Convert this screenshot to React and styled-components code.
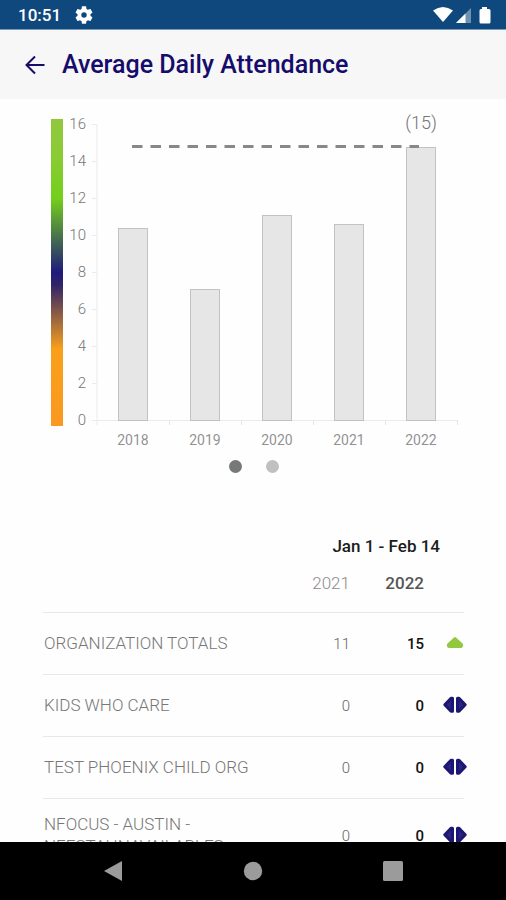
import React from "react";
import styled, { createGlobalStyle } from "styled-components";

const GlobalStyle = createGlobalStyle`
  *, *::before, *::after { box-sizing: border-box; }
  body { margin: 0; background: #fff; font-family: Roboto, "Liberation Sans", sans-serif; }
`;

const Screen = styled.div`
  display: flex;
  flex-direction: column;
  height: 100vh;
  overflow: hidden;
  background: #fefefe;
`;

const StatusBar = styled.div`
  display: flex;
  align-items: center;
  flex: none;
  height: 30px;
  padding: 0 15px 0 18px;
  gap: 14px;
  background: #0f487c;
  border-bottom: 1px solid #7d9ab8;
  color: #fff;
`;

const Clock = styled.time`
  font-size: 17px;
  line-height: 30px;
  font-weight: 500;
`;

const StatusIcons = styled.div`
  display: flex;
  align-items: center;
  margin-left: auto;
`;

const Header = styled.header`
  display: flex;
  align-items: center;
  flex: none;
  height: 69px;
  padding: 0 24px;
  gap: 16px;
  background: #f7f7f7;
  color: #150c6b;
`;

const BackButton = styled.button`
  display: flex;
  padding: 0;
  border: 0;
  background: none;
  color: inherit;
  cursor: pointer;
`;

const Title = styled.h1`
  margin: 0;
  font-size: 25px;
  line-height: 32px;
  font-weight: 500;
`;

const Content = styled.main`
  flex: 1;
  min-height: 0;
  overflow-y: auto;
  scrollbar-width: none;
`;

const Chart = styled.svg`
  display: block;
  width: 100%;
  font-family: Roboto, "Liberation Sans", sans-serif;
`;

const Tick = styled.text`
  font-size: ${(p) => p.$size || 15}px;
  font-weight: ${(p) => p.$weight || 300};
  fill: #757575;
  text-anchor: ${(p) => p.$anchor || "middle"};
`;

const Pager = styled.div`
  display: flex;
  justify-content: center;
  gap: 24px;
  padding: 5px 0 0 2px;
`;

const Dot = styled.button`
  width: 13px;
  height: 13px;
  padding: 0;
  border: 0;
  border-radius: 50%;
  background: ${(p) => (p.$active ? "#777979" : "#c0c0c0")};
  cursor: pointer;
`;

const TableWrap = styled.section`
  padding: 60px 42px 0 43px;
`;

const Table = styled.table`
  width: 100%;
  table-layout: fixed;
  border-collapse: collapse;
  font-size: 17px;
  line-height: 22px;
`;

const Col = styled.col`
  width: ${(p) => p.$width};
`;

const Period = styled.th`
  height: 25px;
  padding: 0 24px 0 0;
  color: #1c1c1c;
  font-weight: 500;
  text-align: right;
`;

const Year = styled.th`
  height: 54px;
  padding: 4px 0 8px;
  vertical-align: middle;
  text-align: right;
  font-size: 17px;
  font-weight: ${(p) => (p.$current ? 500 : 300)};
  color: ${(p) => (p.$current ? "#555" : "#8c8c8c")};
`;

const Row = styled.tr`
  height: 62px;
  border-top: 1px solid #e8e8e8;
`;

const Name = styled.th`
  padding: 14px 0 14px 1px;
  font-weight: 300;
  text-align: left;
  color: #777;
`;

const Value = styled.td`
  padding: 2px 0 0;
  text-align: right;
  font-size: 15px;
  font-weight: ${(p) => (p.$current ? 500 : 300)};
  color: ${(p) => (p.$current ? "#111" : "#666")};
`;

const TrendCell = styled.td`
  padding: 0 0 0 19px;
`;

const TrendIcon = styled.svg`
  display: block;
  overflow: visible;
`;

const NavBar = styled.nav`
  display: flex;
  align-items: center;
  justify-content: center;
  gap: 120px;
  flex: none;
  height: 58px;
  background: #000;
`;

const NavButton = styled.button`
  display: flex;
  padding: 0;
  border: 0;
  background: none;
  color: #9b9b9b;
  cursor: pointer;
`;

const bars = [
  { year: "2018", x: 133, value: 10.4 },
  { year: "2019", x: 205, value: 7.1 },
  { year: "2020", x: 277, value: 11.1 },
  { year: "2021", x: 349, value: 10.6 },
  { year: "2022", x: 421, value: 14.75 },
];
const ticks = [0, 2, 4, 6, 8, 10, 12, 14, 16];
const BASE = 321;
const toY = (v) => Math.round(BASE - v * 18.5);

const rows = [
  { name: "ORGANIZATION TOTALS", previous: 11, current: 15, trend: "up" },
  { name: "KIDS WHO CARE", previous: 0, current: 0, trend: "same" },
  { name: "TEST PHOENIX CHILD ORG", previous: 0, current: 0, trend: "same" },
  { name: "NFOCUS - AUSTIN - NEESTAHNAVAILABLES", previous: 0, current: 0, trend: "same" },
];

function AttendanceChart() {
  return (
    <Chart viewBox="0 0 506 356" role="img" aria-label="Average daily attendance by year">
      <defs>
        <linearGradient id="scale" x1="0" y1="0" x2="0" y2="1">
          <stop offset="0" stopColor="#91c83e" />
          <stop offset="0.12" stopColor="#8acb35" />
          <stop offset="0.26" stopColor="#73cf1b" />
          <stop offset="0.5" stopColor="#1f1a7b" />
          <stop offset="0.54" stopColor="#302467" />
          <stop offset="0.75" stopColor="#f9a01b" />
          <stop offset="1" stopColor="#fb9820" />
        </linearGradient>
      </defs>
      <rect x="51" y="20" width="12" height="307" fill="url(#scale)" />
      <path d={`M97 25V${BASE + 5}M92 ${BASE + 0.5}H458`} stroke="#ebebeb" fill="none" />
      {ticks.map((v) => (
        <g key={v}>
          <path d={`M92 ${toY(v) + 0.5}H97`} stroke="#ebebeb" />
          <Tick x="86" y={toY(v) + 5} $anchor="end">{v}</Tick>
        </g>
      ))}
      {bars.map((b) => (
        <g key={b.year}>
          <path d={`M${b.x + 36.5} ${BASE}v5`} stroke="#e4e4e4" />
          <rect x={b.x - 14.5} y={toY(b.value) + 0.5} width="29" height={BASE - toY(b.value)} fill="#e6e6e6" stroke="#c2c2c2" />
          <Tick x={b.x} y="346" $size={14} $weight={400} fillOpacity="0.8">{b.year}</Tick>
        </g>
      ))}
      <path d="M132 47.5H419" stroke="#888" strokeWidth="3" strokeDasharray="10.5 8" />
      <Tick x="421" y="30" $size={18}>(15)</Tick>
    </Chart>
  );
}

function Trend({ kind }) {
  if (kind === "up") {
    return (
      <TrendIcon width="24" height="18" viewBox="0 0 24 18" role="img" aria-label="Up">
        <path d="M12 4.5L18.5 10.5Q19 12.5 17.5 12.5H6.5Q5 12.5 5.5 10.5Z" fill="#91c83e" stroke="#91c83e" strokeWidth="3" strokeLinejoin="round" />
      </TrendIcon>
    );
  }
  return (
    <TrendIcon width="24" height="18" viewBox="0 0 24 18" role="img" aria-label="No change">
      <g fill="#29247d" stroke="#1c1773" strokeWidth="3" strokeLinejoin="round">
        <path d="M9.5 2.2V15.2H8L1.8 8.7L8 2.2Z" />
        <path d="M14.5 2.2V15.2H16L22.2 8.7L16 2.2Z" />
      </g>
    </TrendIcon>
  );
}

export default function App() {
  return (
    <Screen>
      <GlobalStyle />
      <StatusBar>
        <Clock>10:51</Clock>
        <svg width="18" height="18" viewBox="2 2 20 20" aria-hidden="true">
          <path fill="#fff" fillRule="evenodd" d="M19.14 12.94c.04-.3.06-.61.06-.94s-.02-.64-.07-.94l2.03-1.58c.18-.14.23-.41.12-.61l-1.92-3.32c-.12-.22-.37-.29-.59-.22l-2.39.96c-.5-.38-1.03-.7-1.62-.94l-.36-2.54c-.04-.24-.24-.41-.48-.41h-3.84c-.24 0-.43.17-.47.41l-.36 2.54c-.59.24-1.13.57-1.62.94l-2.39-.96c-.22-.08-.47 0-.59.22L2.74 8.87c-.12.21-.08.47.12.61l2.03 1.58c-.05.3-.09.63-.09.94s.02.64.07.94l-2.03 1.58c-.18.14-.23.41-.12.61l1.92 3.32c.12.22.37.29.59.22l2.39-.96c.5.38 1.03.7 1.62.94l.36 2.54c.05.24.24.41.48.41h3.84c.24 0 .44-.17.47-.41l.36-2.54c.59-.24 1.13-.56 1.62-.94l2.39.96c.22.08.47 0 .59-.22l1.92-3.32c.12-.22.07-.47-.12-.61zM12 15a3 3 0 1 1 0-6 3 3 0 0 1 0 6z" />
        </svg>
        <StatusIcons>
          <svg width="59" height="20" viewBox="0 0 59 20" aria-hidden="true">
            <path d="M1 5.5Q11 -1.5 21 5.5L11 17Z" fill="#fff" />
            <path d="M39 3V18H24Z" fill="#fff" opacity="0.4" />
            <path d="M33.5 8.5V18H24Z" fill="#fff" />
            <path d="M50 4V2h5v2h2q1.5 0 1.5 1.5V17q0 1.5-1.5 1.5h-8q-1.5 0-1.5-1.5V5.5Q47.500 4 49 4Z" fill="#fff" />
          </svg>
        </StatusIcons>
      </StatusBar>
      <Header>
        <BackButton aria-label="Back">
          <svg width="22" height="22" viewBox="0 0 22 22" fill="none" stroke="currentColor" strokeWidth="2">
            <path d="M20.5 11H3M11 2.5L2.5 11L11 19.5" />
          </svg>
        </BackButton>
        <Title>Average Daily Attendance</Title>
      </Header>
      <Content>
        <AttendanceChart />
        <Pager>
          <Dot $active aria-label="Chart 1" />
          <Dot aria-label="Chart 2" />
        </Pager>
        <TableWrap>
          <Table>
            <colgroup>
              <Col />
              <Col $width="70px" />
              <Col $width="74px" />
              <Col $width="40px" />
            </colgroup>
            <thead>
              <tr><Period colSpan={4} scope="colgroup">Jan 1 - Feb 14</Period></tr>
              <tr>
                <td />
                <Year scope="col">2021</Year>
                <Year scope="col" $current>2022</Year>
                <td />
              </tr>
            </thead>
            <tbody>
              {rows.map((r) => (
                <Row key={r.name}>
                  <Name scope="row">{r.name}</Name>
                  <Value>{r.previous}</Value>
                  <Value $current>{r.current}</Value>
                  <TrendCell><Trend kind={r.trend} /></TrendCell>
                </Row>
              ))}
            </tbody>
          </Table>
        </TableWrap>
      </Content>
      <NavBar>
        <NavButton aria-label="Back">
          <svg width="20" height="22" viewBox="0 0 20 22"><path d="M19 1V21L1 11Z" fill="currentColor" /></svg>
        </NavButton>
        <NavButton aria-label="Home">
          <svg width="20" height="20" viewBox="0 0 20 20"><circle cx="10" cy="10" r="9.2" fill="currentColor" /></svg>
        </NavButton>
        <NavButton aria-label="Recent apps">
          <svg width="20" height="20" viewBox="0 0 20 20"><rect width="20" height="20" rx="1.5" fill="currentColor" /></svg>
        </NavButton>
      </NavBar>
    </Screen>
  );
}
